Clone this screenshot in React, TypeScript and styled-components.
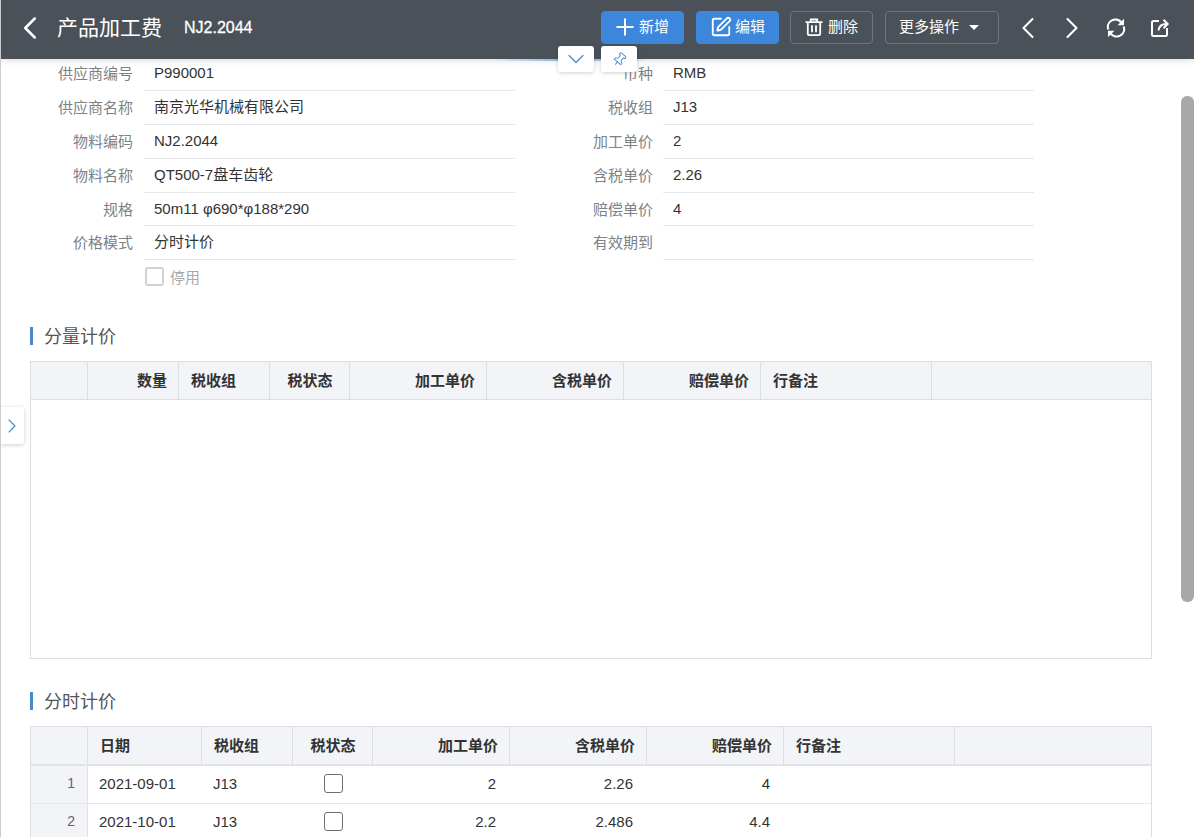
import React from "react";
import styled, { createGlobalStyle } from "styled-components";
import { ChevronDown, ChevronLeft, ChevronRight, Pin, SquarePen } from "lucide-react";

const FONT = `"Liberation Sans", "Noto Sans CJK SC", sans-serif`;

const GlobalStyle = createGlobalStyle`
  html, body {
    margin: 0;
    padding: 0;
    height: 100%;
    overflow: hidden;
    background: #fff;
    font-family: ${FONT};
    font-size: 15px;
    color: #333;
  }
  * { box-sizing: border-box; }
`;

const Page = styled.div`
  position: relative;
  width: 1194px;
  height: 837px;
  overflow: hidden;
  background: #fff;
  border-left: 1px solid #ccc;
`;

const Header = styled.header`
  position: relative;
  z-index: 2;
  display: flex;
  align-items: center;
  height: 59px;
  padding: 0 12px 4px 10px;
  background: #4a5158;
  box-shadow: 0 2px 6px rgba(0, 0, 0, 0.12);
  color: #fff;
`;

const Title = styled.h1`
  margin: 1px 0 0 8px;
  font-size: 21px;
  font-weight: 400;
  line-height: 28px;
`;

const Code = styled.span`
  margin: 1px 0 0 22px;
  font-size: 16px;
  font-weight: 400;
  -webkit-text-stroke: 0.3px #fff;
  color: #fff;
`;

const Actions = styled.div`
  display: flex;
  align-items: center;
  margin-left: auto;
`;

const Button = styled.button<{ $primary?: boolean; $width: number; $gap?: number; $after?: number }>`
  display: flex;
  align-items: center;
  justify-content: center;
  gap: ${({ $gap }) => $gap ?? 5}px;
  width: ${({ $width }) => $width}px;
  height: 33px;
  margin-right: ${({ $after }) => $after ?? 12}px;
  padding: 0 0 1px;
  border: 1px solid ${({ $primary }) => ($primary ? "#3c87dc" : "#6e757c")};
  border-radius: 4px;
  background: ${({ $primary }) => ($primary ? "#3c87dc" : "transparent")};
  color: #fff;
  font-family: ${FONT};
  font-size: 15px;
  line-height: 20px;
`;

const IconButton = styled.button`
  display: flex;
  align-items: center;
  justify-content: center;
  width: 44px;
  height: 33px;
  padding: 0;
  border: 0;
  background: none;
  color: #fff;
`;

const Caret = styled.span`
  width: 0;
  height: 0;
  margin: 1px 6px 0 4px;
  border-left: 5px solid transparent;
  border-right: 5px solid transparent;
  border-top: 5px solid #fff;
`;

const FloatTab = styled.button<{ $left: number }>`
  position: absolute;
  z-index: 3;
  top: 46px;
  left: ${({ $left }) => $left}px;
  display: flex;
  align-items: center;
  justify-content: center;
  width: 36px;
  height: 26px;
  padding: 0;
  border: 0;
  border-radius: 3px;
  background: #fff;
  box-shadow: 0 1px 4px rgba(0, 0, 0, 0.18);
  color: #4a8ad8;
`;

const GlowLine = styled.div`
  position: absolute;
  z-index: 2;
  top: 59px;
  left: 490px;
  width: 160px;
  height: 2px;
  background: linear-gradient(90deg, rgba(74, 138, 216, 0), rgba(74, 138, 216, 0.55) 40%, rgba(74, 138, 216, 0.55) 60%, rgba(74, 138, 216, 0));
`;

const SideTab = styled.button`
  position: absolute;
  z-index: 3;
  top: 407px;
  left: -1px;
  display: flex;
  align-items: center;
  justify-content: center;
  width: 24px;
  height: 37px;
  padding: 0;
  border: 0;
  border-radius: 0 3px 3px 0;
  background: #fff;
  box-shadow: 0 1px 4px rgba(0, 0, 0, 0.2);
  color: #4a8ad8;
`;

const ScrollThumb = styled.div`
  position: absolute;
  z-index: 1;
  top: 96px;
  right: 0;
  width: 13px;
  height: 506px;
  border-radius: 6px;
  background: #a8a8a8;
`;

const Content = styled.main`
  margin-top: -1.6px;
  padding-left: 29px;
`;

const Form = styled.div`
  display: grid;
  grid-template-columns: 114px 371px 148px 371px;
  grid-auto-rows: 33.8px;
`;

const Label = styled.div<{ $right?: boolean }>`
  padding-right: ${({ $right }) => ($right ? 10 : 11)}px;
  line-height: 33px;
  text-align: right;
  color: #7c8288;
`;

const Value = styled.div`
  padding-left: 10px;
  line-height: 32px;
  border-bottom: 1px solid #e6e7e9;
  color: #333;
`;

const CheckRow = styled.label`
  grid-column: 2;
  display: flex;
  align-items: center;
  gap: 6px;
  padding: 0 0 1px 1px;
  color: #a9a9a9;
`;

const Check = styled.span<{ $disabled?: boolean }>`
  display: block;
  width: 19px;
  height: 19px;
  background: #fff;
  border: ${({ $disabled }) => ($disabled ? "2px solid #d2d2d2" : "1.5px solid #6f6f6f")};
  border-radius: 3px;
`;

const Section = styled.section`
  margin-top: 28px;
  width: 1122px;
`;

const SectionTitle = styled.h2`
  display: flex;
  align-items: center;
  height: 28px;
  margin: 0 0 11px;
  padding-left: 11px;
  font-size: 18px;
  font-weight: 400;
  color: #555;
  &::before {
    content: "";
    width: 3px;
    height: 18px;
    margin: 0 11px 0 -11px;
    background: #4a87cf;
  }
`;

const TitleText = styled.span`
  margin-top: -2px;
`;

const Table = styled.div<{ $height?: number }>`
  width: 100%;
  ${({ $height }) => ($height ? `height: ${$height}px;` : "")}
  border: 1px solid #dcdee2;
  border-bottom-width: ${({ $height }) => ($height ? 1 : 0)}px;
`;

const HeadRow = styled.div<{ $cols: string; $thick?: boolean }>`
  display: grid;
  grid-template-columns: ${({ $cols }) => $cols};
  height: ${({ $thick }) => ($thick ? 39 : 38)}px;
  background: #f2f4f8;
  border-bottom: ${({ $thick }) => ($thick ? "2px solid #e0e2e7" : "1px solid #dcdee2")};
`;

const BodyRow = styled.div<{ $cols: string }>`
  display: grid;
  grid-template-columns: ${({ $cols }) => $cols};
  height: 38px;
  background: #fff;
  border-bottom: 1px solid #e6e7e9;
`;

const alignment = ($align?: string) =>
  $align === "right" ? "flex-end" : $align === "center" ? "center" : "flex-start";

const HeadCell = styled.div<{ $align?: string }>`
  display: flex;
  align-items: center;
  justify-content: ${({ $align }) => alignment($align)};
  padding: 0 11px 2px 12px;
  border-right: 1px solid #dcdee2;
  font-weight: 700;
  color: #333;
  &:last-child {
    border-right: 0;
  }
`;

const BodyCell = styled.div<{ $align?: string }>`
  display: flex;
  align-items: center;
  justify-content: ${({ $align }) => alignment($align)};
  padding: ${({ $align }) => ($align === "center" ? "0 0 2px" : "0 14px 2px 11px")};
  color: #333;
`;

const RowNo = styled.div`
  display: flex;
  align-items: center;
  justify-content: flex-end;
  padding: 0 12px 2px 0;
  background: #f2f4f8;
  border-right: 1px solid #e0e2e7;
  font-size: 14px;
  color: #666;
`;

const HeadNo = styled.div`
  border-right: 1px solid #dcdee2;
`;

const fields = [
  ["供应商编号", "P990001", "币种", "RMB"],
  ["供应商名称", "南京光华机械有限公司", "税收组", "J13"],
  ["物料编码", "NJ2.2044", "加工单价", "2"],
  ["物料名称", "QT500-7盘车齿轮", "含税单价", "2.26"],
  ["规格", "50m11 φ690*φ188*290", "赔偿单价", "4"],
  ["价格模式", "分时计价", "有效期到", ""],
];

const qtyHead = ["数量", "税收组", "税状态", "加工单价", "含税单价", "赔偿单价", "行备注", ""];
const qtyAligns = ["right", "left", "center", "right", "right", "right", "left", "left"];
const qtyCols = "57px 91px 91px 80px 137px 137px 137px 171px 1fr";

const timeHead = ["日期", "税收组", "税状态", "加工单价", "含税单价", "赔偿单价", "行备注", ""];
const timeAligns = ["left", "left", "center", "right", "right", "right", "left", "left"];
const timeCols = "57px 114px 91px 80px 137px 137px 137px 171px 1fr";
const timeRows = [
  ["2021-09-01", "J13", "", "2", "2.26", "4", "", ""],
  ["2021-10-01", "J13", "", "2.2", "2.486", "4.4", "", ""],
];

const PlusIcon = () => (
  <svg width="18" height="18" viewBox="0 0 18 18" fill="none" stroke="currentColor" strokeWidth="2">
    <path d="M9 .5v17M.5 9h17" />
  </svg>
);

const TrashIcon = () => (
  <svg width="18" height="18" viewBox="0 0 18 18" fill="none" stroke="currentColor" strokeWidth="1.8">
    <path d="M.5 4.200h17M5.800 4V1.500h6.400V4M2.800 4.200v11.600c0 .8.500 1.300 1.300 1.300h9.800c.8 0 1.300-.5 1.300-1.300V4.200M7 7.200v7M11 7.200v7" />
  </svg>
);

const RefreshIcon = () => (
  <svg width="20" height="20" viewBox="0 0 20 20" fill="none" stroke="currentColor" strokeWidth="2.200">
    <path d="M2.300 11.500A7.500 7.500 0 0 1 15.300 4.400M17.700 8.500A7.500 7.500 0 0 1 4.700 15.600" />
    <path d="M18 .8v6.400h-6.400zM2 19.200v-6.400h6.400z" fill="currentColor" stroke="none" />
  </svg>
);

const ShareIcon = () => (
  <svg width="20" height="20" viewBox="0 0 20 20" fill="none" stroke="currentColor" strokeWidth="2">
    <path d="M9 3H3.500C2.500 3 2 3.500 2 4.500v12c0 1 .5 1.500 1.500 1.500h12c1 0 1.500-.5 1.500-1.500V10" />
    <path d="M8.500 12.500c.4-4 2.800-6.500 8-6.500M13.500 1.800l4.200 4.200-4.200 4.200" />
  </svg>
);

export default function App() {
  return (
    <Page>
      <GlobalStyle />
      <Header>
        <ChevronLeft size={38} strokeWidth={1.6} />
        <Title>产品加工费</Title>
        <Code>NJ2.2044</Code>
        <Actions>
          <Button $primary $width={83}>
            <PlusIcon />
            新增
          </Button>
          <Button $primary $width={83} $gap={3} $after={11}>
            <SquarePen size={22} strokeWidth={2} />
            编辑
          </Button>
          <Button $width={83}>
            <TrashIcon />
            删除
          </Button>
          <Button $width={114} $gap={6} $after={7}>
            更多操作
            <Caret />
          </Button>
          <IconButton>
            <ChevronLeft size={36} strokeWidth={1.4} />
          </IconButton>
          <IconButton>
            <ChevronRight size={36} strokeWidth={1.4} />
          </IconButton>
          <IconButton>
            <RefreshIcon />
          </IconButton>
          <IconButton>
            <ShareIcon />
          </IconButton>
        </Actions>
      </Header>
      <GlowLine />
      <FloatTab $left={557}>
        <ChevronDown size={28} strokeWidth={1.1} />
      </FloatTab>
      <FloatTab $left={600}>
        <Pin size={15} strokeWidth={1.6} style={{ transform: "rotate(40deg)" }} />
      </FloatTab>
      <SideTab>
        <ChevronRight size={28} strokeWidth={1.1} />
      </SideTab>
      <ScrollThumb />

      <Content>
        <Form>
          {fields.map((f) => (
            <React.Fragment key={f[0]}>
              <Label>{f[0]}</Label>
              <Value>{f[1]}</Value>
              <Label $right>{f[2]}</Label>
              <Value>{f[3]}</Value>
            </React.Fragment>
          ))}
          <CheckRow>
            <Check $disabled />
            停用
          </CheckRow>
        </Form>

        <Section>
          <SectionTitle>
            <TitleText>分量计价</TitleText>
          </SectionTitle>
          <Table $height={298}>
            <HeadRow $cols={qtyCols}>
              <HeadNo />
              {qtyHead.map((h, i) => (
                <HeadCell key={i} $align={qtyAligns[i]}>
                  {h}
                </HeadCell>
              ))}
            </HeadRow>
          </Table>
        </Section>

        <Section>
          <SectionTitle>
            <TitleText>分时计价</TitleText>
          </SectionTitle>
          <Table>
            <HeadRow $thick $cols={timeCols}>
              <HeadNo />
              {timeHead.map((h, i) => (
                <HeadCell key={i} $align={timeAligns[i]}>
                  {h}
                </HeadCell>
              ))}
            </HeadRow>
            {timeRows.map((r, n) => (
              <BodyRow key={n} $cols={timeCols}>
                <RowNo>{n + 1}</RowNo>
                {r.map((c, i) => (
                  <BodyCell key={i} $align={timeAligns[i]}>
                    {i === 2 ? <Check /> : c}
                  </BodyCell>
                ))}
              </BodyRow>
            ))}
          </Table>
        </Section>
      </Content>
    </Page>
  );
}
